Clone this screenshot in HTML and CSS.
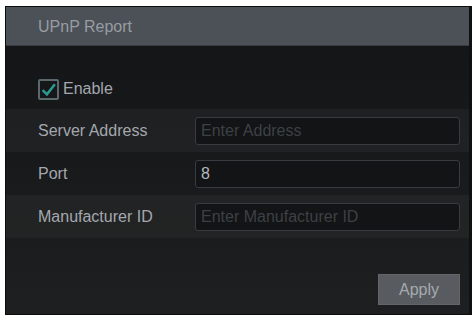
FILE: index.html
```html
<!DOCTYPE html>
<html>
<head>
    <meta charset="UTF-8">
    <title>UPnP Report</title>
    <link rel="stylesheet" href="styles.css">
</head>
<body>

    <div class="panel">
        <div class="header">UPnP Report</div>
        <div class="content">
            <div class="enable">
                <span class="checkbox">
                    <svg width="17" height="17" viewBox="0 0 16 16">
                        <path d="M2.5 8.5 L6.5 12.5 L14 3" fill="none" stroke="#2b9a91" stroke-width="2.4"/>
                    </svg>
                </span>
                <span>Enable</span>
            </div>
            <div class="row band">
                <div class="label">Server Address</div>
                <div class="field placeholder">Enter Address</div>
            </div>
            <div class="row">
                <div class="label">Port</div>
                <div class="field value">8</div>
            </div>
            <div class="row band">
                <div class="label">Manufacturer ID</div>
                <div class="field placeholder">Enter Manufacturer ID</div>
            </div>
            <div class="actions">
                <button class="apply">Apply</button>
            </div>
        </div>
    </div>

</body>
</html>
```

FILE: styles.css
```css
body {
    margin: 0;
    background: #ffffff;
    font-family: "Liberation Sans", Arial, sans-serif;
    font-size: 16px;
}

.panel {
    margin: 6px 0 0 5px;
    width: 463px;
    height: 307px;
    border: 1px solid #0b0c0d;
    border-right: 3px solid #0e1011;
    display: flex;
    flex-direction: column;
    background: linear-gradient(#121416, #1d1f20);
}

.header {
    height: 38px;
    line-height: 40px;
    padding-left: 32px;
    background: #4c5057;
    color: #989ca3;
    border-bottom: 1px solid #3a3d42;
}

.content {
    flex: 1;
    display: flex;
    flex-direction: column;
}

.enable {
    display: flex;
    align-items: center;
    gap: 4px;
    height: 30px;
    margin-top: 28px;
    padding-left: 32px;
    color: #a4a8ae;
}

.checkbox {
    width: 17px;
    height: 17px;
    border: 2px solid #5b686e;
    border-radius: 2px;
    display: flex;
}

.row {
    display: flex;
    align-items: center;
    height: 43px;
    padding-left: 32px;
}

.band {
    background: rgba(255, 255, 255, 0.035);
}

.enable + .row {
    margin-top: 5px;
}

.label {
    width: 157px;
    color: #a4a8ae;
}

.field {
    width: 258px;
    height: 26px;
    line-height: 26px;
    padding-left: 5px;
    border: 1px solid #383b3f;
    border-radius: 3px;
    background: #121415;
}

.placeholder {
    color: #3d4145;
}

.value {
    color: #b4b8bd;
}

.actions {
    margin-top: auto;
    margin-bottom: 9px;
    display: flex;
    justify-content: flex-end;
    padding-right: 9px;
}

.apply {
    width: 82px;
    height: 31px;
    background: #585c60;
    border: 1px solid #62666a;
    color: #a6aaae;
    font-family: "Liberation Sans", Arial, sans-serif;
    font-size: 16px;
}
```
